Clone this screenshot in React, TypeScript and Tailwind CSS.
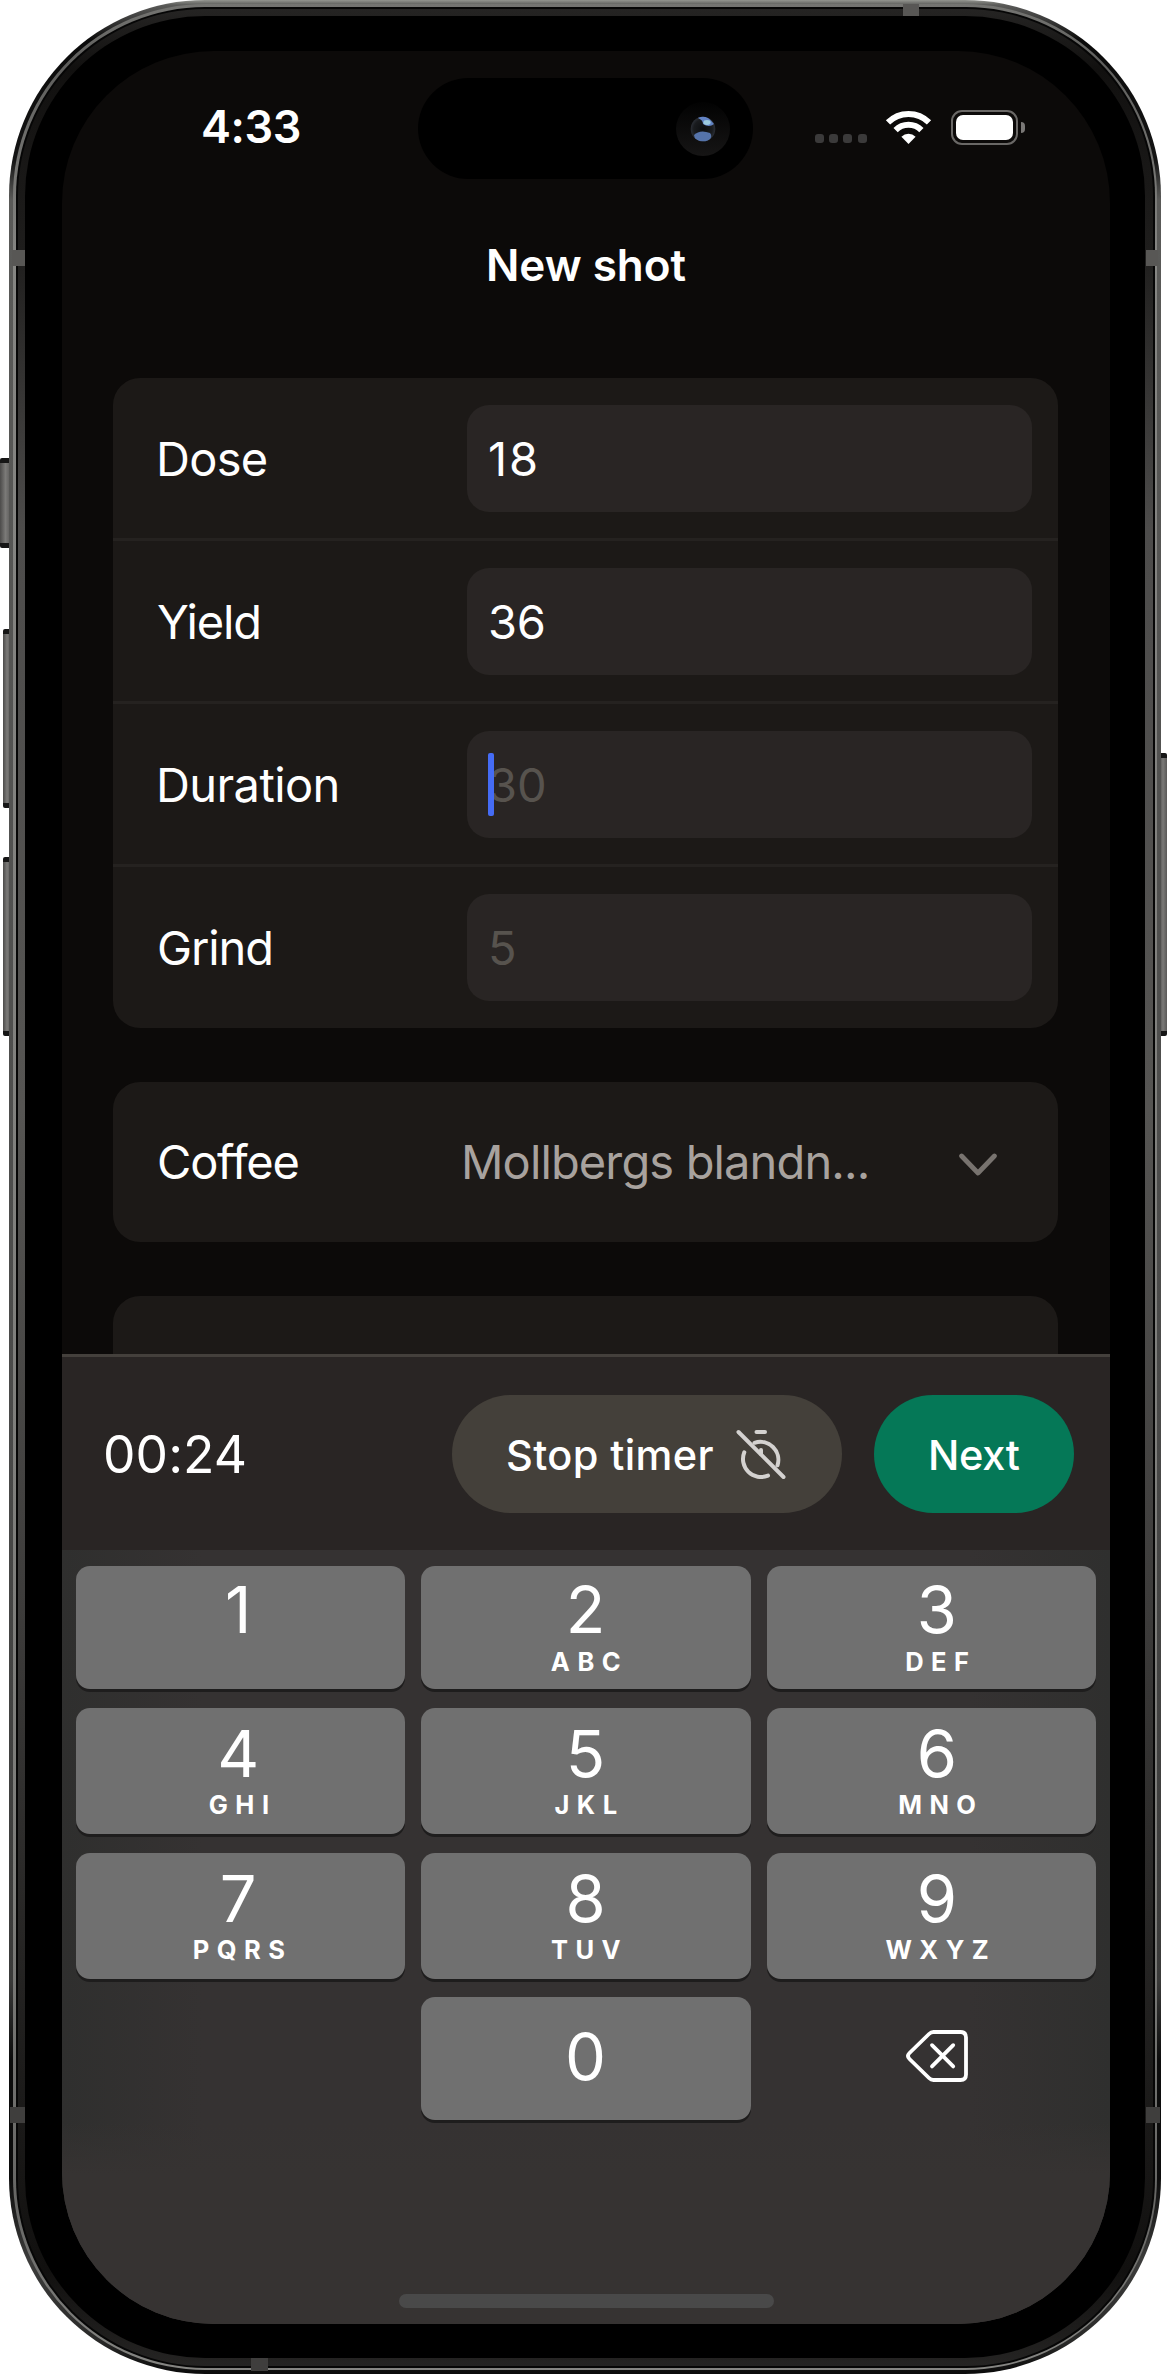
import type { ReactNode } from "react";

type Field = {
  label: string;
  labelClass: string;
  value?: string;
  valueClass?: string;
  placeholder?: string;
  focused?: boolean;
};

const fields: Field[] = [
  { label: "Dose", labelClass: "pl-[43px] tracking-[-0.7px]", value: "18", valueClass: "tracking-[1.8px]" },
  { label: "Yield", labelClass: "pl-[44px] tracking-[-1.13px]", value: "36", valueClass: "tracking-[-0.23px]" },
  { label: "Duration", labelClass: "pl-[43px] tracking-[-0.6px]", placeholder: "30", focused: true },
  { label: "Grind", labelClass: "pl-[44px] tracking-[-1.09px]", placeholder: "5" },
];

const keyRows: { height: string; keys: { digit: string; letters: string }[] }[] = [
  {
    height: "h-[123px]",
    keys: [
      { digit: "1", letters: "" },
      { digit: "2", letters: "ABC" },
      { digit: "3", letters: "DEF" },
    ],
  },
  {
    height: "h-[126px]",
    keys: [
      { digit: "4", letters: "GHI" },
      { digit: "5", letters: "JKL" },
      { digit: "6", letters: "MNO" },
    ],
  },
  {
    height: "h-[126px]",
    keys: [
      { digit: "7", letters: "PQRS" },
      { digit: "8", letters: "TUV" },
      { digit: "9", letters: "WXYZ" },
    ],
  },
];

const digitPadding = ["pr-[5px]", "pr-[1px]", "pl-[11px]"];
const letterPadding = ["pl-[4px]", "pl-[7px]", "pl-[19px]"];

function StatusBar() {
  return (
    <div className="flex h-[153px] items-center">
      <div className="w-[356px] pb-[2px] pl-[139px] text-[45px] leading-none font-semibold tracking-[-0.42px]">4:33</div>
      <div className="mt-[2px] flex h-[101px] w-[335px] items-center justify-end rounded-full bg-black pr-[23px]">
        <Camera />
      </div>
      <div className="flex flex-1 items-center pl-[62px]">
        <div className="mt-[22px] flex gap-[5.2px]">
          {[0, 1, 2, 3].map((dot) => (
            <span key={dot} className="size-[9px] rounded-[3px] bg-[#3b3a3a]" />
          ))}
        </div>
        <svg className="mb-px ml-[18px] h-[34px] w-[47px]" viewBox="0 0 47 34" fill="none">
          <g stroke="#fff" strokeWidth="6">
            <path d="M3 12.4 A29 29 0 0 1 44 12.4" />
            <path d="M10.6 20.2 A18.2 18.2 0 0 1 36.4 20.2" />
          </g>
          <path d="M23.5 34 L16.4 26.7 A10.2 10.2 0 0 1 30.6 26.7 Z" fill="#fff" />
        </svg>
        <div className="mb-px ml-[19px] flex items-center">
          <div className="flex h-[35px] w-[67px] items-center justify-center rounded-[11px] border-[2.7px] border-[#6a6866]">
            <div className="h-[25px] w-[57px] rounded-[7px] bg-white" />
          </div>
          <div className="ml-[3px] h-[11px] w-[4px] rounded-r-full bg-[#7a7876]" />
        </div>
      </div>
    </div>
  );
}

function Camera() {
  return (
    <svg className="size-[54px]" viewBox="0 0 54 54">
      <defs>
        <linearGradient id="ring" x1="0" y1="0" x2="0" y2="1">
          <stop offset="0" stopColor="#020202" />
          <stop offset="1" stopColor="#161515" />
        </linearGradient>
        <radialGradient id="lens" cx="0.5" cy="0.5" r="0.5">
          <stop offset="0" stopColor="#0c0e10" />
          <stop offset="0.75" stopColor="#191b1e" />
          <stop offset="1" stopColor="#2a2e35" />
        </radialGradient>
        <clipPath id="lens-clip">
          <circle cx="27" cy="27" r="12.3" />
        </clipPath>
        <filter id="soft">
          <feGaussianBlur stdDeviation="0.7" />
        </filter>
      </defs>
      <circle cx="27" cy="27" r="27" fill="url(#ring)" />
      <circle cx="27" cy="27" r="12.3" fill="url(#lens)" />
      <g clipPath="url(#lens-clip)">
        <g filter="url(#soft)">
          <path d="M22 14 Q31 12 38 22 Q33 26 27 22 Q27 18 22 16 Z" fill="#6283c4" />
          <ellipse cx="31" cy="20.5" rx="3.6" ry="2.4" fill="#9ccbe0" />
          <path d="M18 33 Q24 27 34 31 Q37 34 33 39 Q26 42 19 37 Z" fill="#5573aa" />
        </g>
      </g>
    </svg>
  );
}

function Card({ className, children }: { className: string; children?: ReactNode }) {
  return <section className={`mr-[52px] ml-[51px] shrink-0 bg-[#1c1917] ${className}`}>{children}</section>;
}

function FieldRow({ field, last }: { field: Field; last: boolean }) {
  return (
    <div className={`flex items-center ${last ? "h-[161px]" : "h-[163px] border-b-[3px] border-[#252220]"}`}>
      <label className={`w-[354px] text-[47px] leading-none ${field.labelClass}`}>{field.label}</label>
      <div className="relative flex h-[107px] w-[565px] items-center rounded-[22px] bg-[#292524] pl-[21px] text-[47px] leading-none">
        {field.value ? (
          <span className={field.valueClass}>{field.value}</span>
        ) : (
          <span className="text-[#57534e]">{field.placeholder}</span>
        )}
        {field.focused && <span className="absolute top-[22px] left-[21px] h-[63px] w-[6px] rounded-[2px] bg-[#456cf5]" />}
      </div>
    </div>
  );
}

function TimerOffIcon() {
  return (
    <svg className="h-[54px] w-[52px]" viewBox="0 0 52 54" fill="none" stroke="#d4d2d0" strokeWidth="4" strokeLinecap="round">
      <path d="M21.5 5 H30" />
      <path d="M3.5 5 L48.5 50" />
      <path d="M9.3 25.3 A18 18 0 0 0 33 48.6" />
      <path d="M19.5 15.8 A18 18 0 0 1 42.5 38.3" />
      <path d="M26 23 V27" />
    </svg>
  );
}

function TimerBar() {
  return (
    <div className="flex h-[196px] shrink-0 items-center border-t-[3px] border-[#44403c] bg-[#292524] pr-[36px] pl-[41px]">
      <div className="flex-1 pt-[2px] text-[51.5px] leading-none tracking-[0.1px]">00:24</div>
      <button className="mt-px flex h-[118px] w-[390px] items-center rounded-full bg-[#44403a] pl-[54px] text-[41.5px] leading-none font-medium tracking-[0.37px]">
        <span className="w-[229px] pt-[3px] text-left">Stop timer</span>
        <TimerOffIcon />
      </button>
      <button className="mt-px ml-[32px] flex h-[118px] w-[200px] items-center rounded-full bg-[#057857] pt-[3px] pl-[54px] text-[41.5px] leading-none font-medium tracking-[-0.3px]">
        Next
      </button>
    </div>
  );
}

function Key({ children }: { children: ReactNode }) {
  return (
    <button className="flex flex-col items-center justify-center rounded-[14px] bg-[#707070] shadow-[0_3px_0_#1e1d1d]">
      {children}
    </button>
  );
}

function Keyboard() {
  return (
    <div className="flex flex-1 flex-col bg-[linear-gradient(to_right,#2f2f2e_0px,#353232_140px,#353232_908px,#2f2f2e_1048px)] px-[14px] pt-[16px]">
      <div className="flex flex-col gap-[19px]">
        {keyRows.map((row) => (
          <div key={row.keys[0].digit} className={`grid grid-cols-3 gap-[16px] ${row.height}`}>
            {row.keys.map((key, column) => (
              <Key key={key.digit}>
                <span className={`flex h-[68px] items-center text-[65px] leading-none ${digitPadding[column]}`}>{key.digit}</span>
                <span
                  className={`flex h-[36px] items-center text-[25.5px] leading-none font-bold tracking-[7.5px] ${letterPadding[column]}`}
                >
                  {key.letters}
                </span>
              </Key>
            ))}
          </div>
        ))}
      </div>
      <div className="mt-[18px] grid h-[123px] grid-cols-3 gap-[16px]">
        <div />
        <Key>
          <span className="pr-[1px] pb-[5px] text-[65px] leading-none">0</span>
        </Key>
        <div className="flex items-center justify-center">
          <svg className="mr-[-12px] mb-[5px] h-[54px] w-[64px]" viewBox="0 0 64 54" fill="none" stroke="#fff" strokeWidth="3.8" strokeLinecap="round" strokeLinejoin="round">
            <path d="M28.5 3 H55.5 Q61 3 61 8.5 V45.5 Q61 51 55.5 51 H28.5 Q26 51 24 49 L4.5 30 Q1.5 27 4.5 24 L24 5 Q26 3 28.5 3 Z" />
            <path d="M27 16.2 L48.2 37.4 M48.2 16.2 L27 37.4" />
          </svg>
        </div>
      </div>
      <div className="-mx-[14px] mt-[3px] flex flex-1 items-end justify-center bg-linear-to-b from-[#363332]/0 to-[#363332] to-25% pb-[16px]">
        <div className="h-[14px] w-[375px] rounded-full bg-[#494949]" />
      </div>
    </div>
  );
}

function Screen() {
  return (
    <div className="flex h-[2273px] w-[1048px] flex-col overflow-hidden rounded-[152px] bg-[#0c0a09] font-[Inter,sans-serif] text-white">
      <StatusBar />
      <h1 className="h-[122px] text-center text-[44px] leading-[122px] font-[560]">New shot</h1>
      <div className="mt-[52px] flex h-[976px] flex-col gap-[54px] overflow-hidden">
        <Card className="rounded-[27px]">
          {fields.map((field, i) => (
            <FieldRow key={field.label} field={field} last={i === fields.length - 1} />
          ))}
        </Card>
        <Card className="flex h-[160px] items-center rounded-[27px] text-[47px] leading-none">
          <span className="w-[348px] pb-[2px] pl-[44px] tracking-[-1.2px]">Coffee</span>
          <span className="w-[498px] pb-[2px] text-[#a8a29e] tracking-[-0.87px]">Mollbergs blandn...</span>
          <svg className="mt-[5px] h-[24px] w-[38px]" viewBox="0 0 38 24" fill="none" stroke="#78736f" strokeWidth="4.8" strokeLinecap="round" strokeLinejoin="round">
            <path d="M2.6 3 L19 20 L35.4 3" />
          </svg>
        </Card>
        <Card className="h-[80px] rounded-t-[27px]" />
      </div>
      <TimerBar />
      <Keyboard />
    </div>
  );
}

function SideButton({ className }: { className: string }) {
  return (
    <div className={`absolute rounded-[2px] border-y-[5px] border-[#161616] bg-linear-to-r from-[#4c4b4a] via-[#7b7a78] to-[#5a5958] ${className}`} />
  );
}

function AntennaBand({ className }: { className: string }) {
  return <div className={`absolute ${className}`} />;
}

export default function App() {
  return (
    <div className="relative h-[2374px] w-[1169px] overflow-hidden bg-white">
      <SideButton className="top-[458px] left-0 h-[90px] w-[11px]" />
      <SideButton className="top-[629px] left-[3px] h-[179px] w-[8px]" />
      <SideButton className="top-[857px] left-[3px] h-[179px] w-[8px]" />
      <SideButton className="top-[753px] left-[1159px] h-[283px] w-[8px]" />
      <div className="relative ml-[9px] h-[2374px] w-[1152px] rounded-[196px] bg-[linear-gradient(to_bottom,#93958f_0px,#5a5a58_5px,#3a3a39_20px,#0a0a0a_40px,#141414_160px,#5a5a58_200px,#4a4a49_1400px,#3a3a39_1980px,#0c0c0c_2060px,#0c0c0c_2180px,#3c3c3b_2260px,#2a2a29_2340px,#0a0a0a_2374px)] p-[4px]">
        <div className="h-full rounded-[192px] bg-[linear-gradient(to_bottom,#757572_0px,#5e5e5c_60px,#858582_250px,#7c7c79_1900px,#666664_2200px,#858582_2366px)] p-[2.5px]">
          <div className="h-full rounded-[189px] bg-[#060606] p-[2px]">
            <div className="h-full rounded-[187px] bg-[linear-gradient(to_bottom,#252423_0px,#11100f_60px,#1e1d1c_240px,#4d4c4b_520px,#565553_1100px,#3d3c3b_1600px,#1e1d1c_2050px,#11100f_2260px,#252423_2357px)] p-[7.5px]">
              <div className="h-full rounded-[180px] bg-black pt-[35px] pl-[37px]">
                <Screen />
              </div>
            </div>
          </div>
        </div>
      </div>
      <AntennaBand className="top-[250px] left-[12px] h-[16px] w-[13px] bg-[#585755]" />
      <AntennaBand className="top-[250px] left-[1146px] h-[16px] w-[12px] bg-[#585755]" />
      <AntennaBand className="top-[4px] left-[903px] h-[12px] w-[16px] bg-[#585755]" />
      <AntennaBand className="top-[2107px] left-[10px] h-[16px] w-[15px] bg-[#3f3e3d]" />
      <AntennaBand className="top-[2107px] left-[1146px] h-[16px] w-[14px] bg-[#3f3e3d]" />
      <AntennaBand className="top-[2358px] left-[251px] h-[13px] w-[17px] bg-[#3f3e3d]" />
    </div>
  );
}
